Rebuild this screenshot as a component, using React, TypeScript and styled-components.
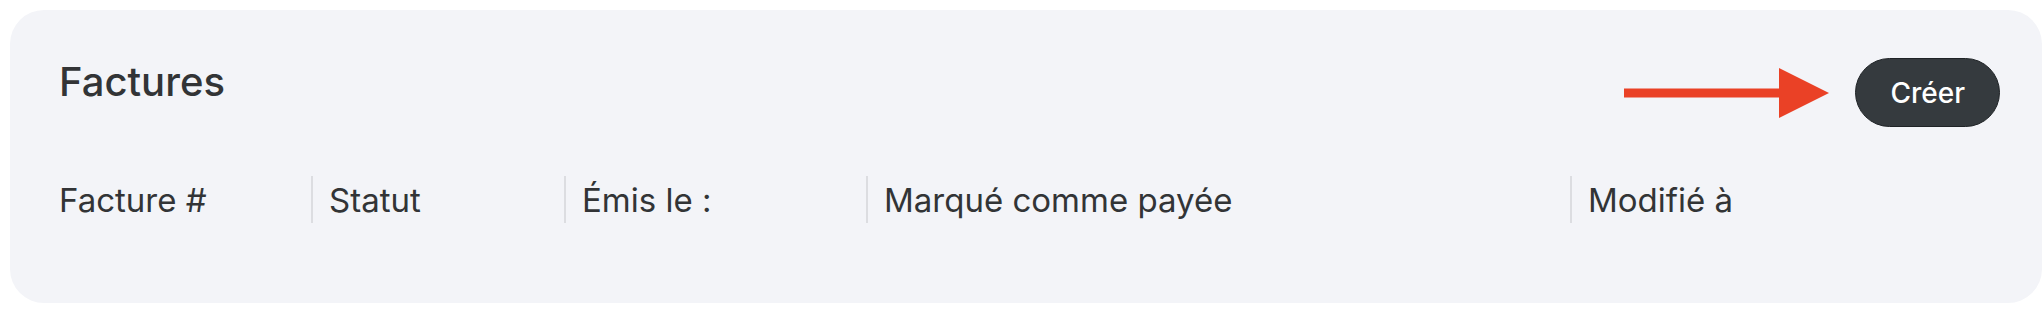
import React from 'react';
import styled, { createGlobalStyle } from 'styled-components';

const GlobalStyle = createGlobalStyle`
  html, body {
    margin: 0;
    padding: 0;
    background: #ffffff;
    overflow: hidden;
  }

  body {
    font-family: Inter, "Noto Sans", sans-serif;
    color: #323436;
  }
`;

const columns = [
  { label: 'Facture #', width: '252px' },
  { label: 'Statut', width: '253px' },
  { label: 'Émis le :', width: '302px' },
  { label: 'Marqué comme payée', width: '704px' },
  { label: 'Modifié à', width: '1fr' },
];

const Card = styled.section`
  box-sizing: border-box;
  margin: 10px 0 0 10px;
  width: 2032px;
  height: 293px;
  padding: 48px 42px 0 49px;
  background: #f3f4f8;
  border-radius: 34px;
`;

const TopBar = styled.div`
  display: flex;
  justify-content: space-between;
  align-items: flex-start;
`;

const Title = styled.h1`
  margin: 0;
  font-size: 40px;
  line-height: 48px;
  font-weight: 500;
  color: #323436;
`;

const Actions = styled.div`
  display: flex;
  align-items: center;
  gap: 26px;
`;

const CreateButton = styled.button`
  box-sizing: border-box;
  height: 69px;
  padding: 0 34px;
  border: 1px solid #1f2326;
  border-radius: 999px;
  background: #353a3e;
  color: #ffffff;
  font-family: Inter, "Noto Sans", sans-serif;
  font-size: 28px;
  font-weight: 500;
  cursor: pointer;
`;

const HeaderRow = styled.div<{ $template: string }>`
  display: grid;
  grid-template-columns: ${(p) => p.$template};
  margin-top: 49px;
`;

const HeaderCell = styled.div<{ $divider: boolean }>`
  display: flex;
  align-items: center;
  height: 47px;
  padding-left: ${(p) => (p.$divider ? '16px' : '0')};
  border-left: ${(p) => (p.$divider ? '2px solid #dcdde1' : 'none')};
  font-size: 33px;
  font-weight: 400;
  white-space: nowrap;
  color: #323436;
`;

const Arrow: React.FC = () => (
  <svg width="205" height="50" viewBox="0 0 205 50" aria-hidden="true">
    <rect x="0" y="20.5" width="158" height="9" fill="#ea4126" />
    <polygon points="155,0 205,25 155,50" fill="#ea4126" />
  </svg>
);

const App: React.FC = () => {
  const template = columns.map((c) => c.width).join(' ');

  return (
    <>
      <GlobalStyle />
      <Card>
        <TopBar>
          <Title>Factures</Title>
          <Actions>
            <Arrow />
            <CreateButton type="button">Créer</CreateButton>
          </Actions>
        </TopBar>
        <HeaderRow $template={template}>
          {columns.map((c, i) => (
            <HeaderCell key={c.label} $divider={i > 0}>
              {c.label}
            </HeaderCell>
          ))}
        </HeaderRow>
      </Card>
    </>
  );
};

export default App;
